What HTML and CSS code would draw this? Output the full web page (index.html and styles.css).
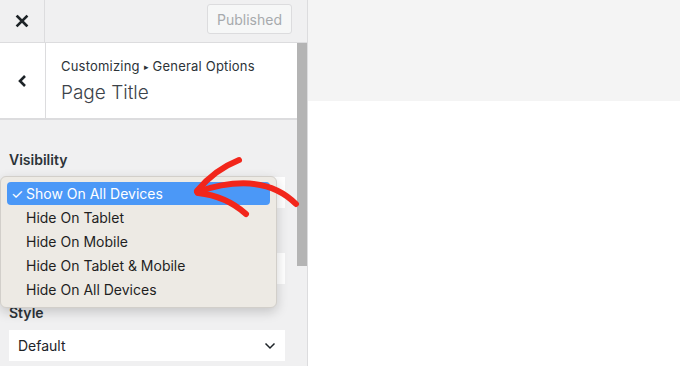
FILE: index.html
```html
<!DOCTYPE html>
<html>
<head>
  <meta charset="utf-8">
  <title>Customizing: Page Title</title>
  <link rel="stylesheet" href="styles.css">
</head>
<body>
  <div class="sidebar">
    <div class="topbar">
      <div class="close">
        <svg width="14" height="14" viewBox="0 0 14 14"><path d="M2.5 2.5 L11.5 11.5 M11.5 2.5 L2.5 11.5" stroke="#1d2327" stroke-width="2.6" stroke-linecap="square"/></svg>
      </div>
      <div class="grow"></div>
      <button class="published">Published</button>
    </div>
    <div class="scroller">
      <div class="panel">
        <div class="section-head">
          <div class="back">
            <svg width="12" height="14" viewBox="0 0 12 14"><path d="M8 2 L3 7 L8 12" fill="none" stroke="#1d2327" stroke-width="2.6"/></svg>
          </div>
          <div class="titles">
            <div class="crumb">Customizing <span class="tri">▸</span> General Options</div>
            <div class="title">Page Title</div>
          </div>
        </div>
        <div class="controls">
          <div class="label">Visibility</div>
          <div class="field"></div>
          <div class="gap"></div>
          <div class="field"></div>
          <div class="label">Style</div>
          <div class="field select">
            <span>Default</span>
            <svg width="12" height="8" viewBox="0 0 12 8"><path d="M1.5 1.5 L6 6 L10.5 1.5" fill="none" stroke="#1d2327" stroke-width="1.5"/></svg>
          </div>
        </div>
      </div>
      <div class="scrollbar"><div class="thumb"></div></div>
    </div>

    <ul class="menu">
      <li class="on"><span class="check">✓</span>Show On All Devices</li>
      <li>Hide On Tablet</li>
      <li>Hide On Mobile</li>
      <li>Hide On Tablet &amp; Mobile</li>
      <li>Hide On All Devices</li>
    </ul>

    <svg class="arrow" width="120" height="80" viewBox="190 150 120 80">
      <g fill="none" stroke="#f2261b" stroke-width="6" stroke-linecap="round">
        <path d="M197 192 Q262 170 296 204"/>
        <path d="M197 191 Q214 170 239 160"/>
        <path d="M198 193 Q226 196 246 214"/>
      </g>
    </svg>
  </div>
  <div class="preview">
    <div class="preview-top"></div>
  </div>
</body>
</html>
```

FILE: styles.css
```css
* {
  margin: 0; padding: 0;
  box-sizing: border-box; }
body {
  display: flex;
  height: 366px;
  overflow: hidden;
  font-family: Inter, "Liberation Sans", sans-serif;
  color: #1d2327;
  background: #fff; }

/* sidebar */
.sidebar {
  position: relative;
  width: 308px;
  flex-shrink: 0;
  background: #f0f0f1;
  border-right: 1px solid #dcdcde;
  display: flex;
  flex-direction: column; }
.topbar {
  height: 43px;
  display: flex;
  align-items: center;
  border-bottom: 1px solid #dcdcde; }
.close {
  width: 45px; height: 42px;
  border-right: 1px solid #dcdcde;
  display: flex;
  align-items: center;
  justify-content: center; }
.grow { flex-grow: 1; }
.published {
  width: 85px; height: 30px;
  margin-right: 15px;
  margin-top: -4px;
  border: 1px solid #dcdcde;
  border-radius: 3px;
  background: #f6f7f7;
  color: #a7aaad;
  font: 14px Inter, "Liberation Sans", sans-serif; }

.scroller {
  flex-grow: 1;
  display: flex; }
.panel { width: 297px; }
.scrollbar {
  width: 10px; }
.thumb {
  height: 223px;
  background: #b4b4b4; }

.section-head {
  height: 77px;
  background: #fff;
  border-bottom: 2px solid #dcdcde;
  display: flex; }
.back {
  width: 46px;
  border-right: 1px solid #dcdcde;
  display: flex;
  align-items: center;
  justify-content: center; }
.titles { padding: 15px 0 0 15px; }
.crumb {
  font-size: 13px;
  letter-spacing: 0.2px;
  color: #2c3338; }
.tri { font-size: 9px; vertical-align: 1px; }
.title {
  margin-top: 7px;
  font-size: 19px;
  font-weight: 300;
  color: #3c434a; }

.controls { padding: 30px 12px 0 9px; }
.label {
  font-size: 14px;
  font-weight: 600;
  color: #2c3338;
  line-height: 20px; }
.field {
  margin-top: 7px;
  height: 31px;
  background: #fff; }
.gap { height: 38px; }
.controls .label + .field { margin-top: 7px; }
.controls .field + .label { margin-top: 19px; }
.select {
  display: flex;
  align-items: center;
  justify-content: space-between;
  padding: 0 9px;
  font-size: 14px; }

/* native popup */
.menu {
  position: absolute;
  left: 0; top: 176px;
  width: 277px;
  padding: 5px 6px;
  list-style: none;
  background: #edeae4;
  border: 1px solid #d2cfca;
  border-radius: 6px;
  box-shadow: 0 4px 12px rgba(0, 0, 0, 0.18);
  font-size: 14px;
  color: #1f1f1f; }
.menu li {
  height: 24px;
  line-height: 24px;
  padding-left: 19px;
  border-radius: 4px; }
.menu li.on {
  background: #4b98f7;
  color: #fff;
  padding-left: 4px;
  height: 23px; line-height: 23px; margin-bottom: 1px; }
.check {
  display: inline-block;
  width: 15px; }

.arrow {
  position: absolute;
  left: 190px; top: 150px; }

/* preview */
.preview { flex-grow: 1; }
.preview-top {
  height: 101px;
  background: #f4f4f4; }
```
